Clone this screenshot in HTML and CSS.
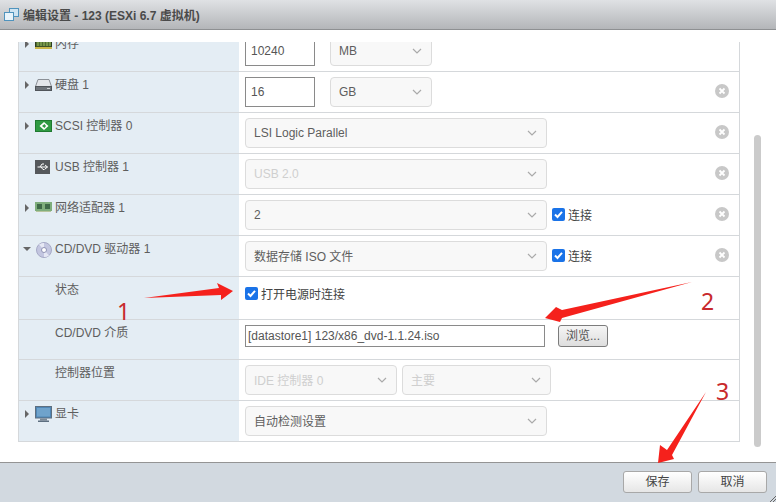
FILE: index.html
```html
<!DOCTYPE html>
<html lang="zh">
<head>
<meta charset="utf-8">
<title>编辑设置</title>
<link rel="stylesheet" href="styles.css">
</head>
<body>
<div class="dialog">
  <header class="head">
    <svg class="head-icon" width="15" height="15" viewBox="0 0 15 15"><rect x="5.5" y="1.5" width="9" height="8" fill="#cfe4f2" stroke="#4f93bd"/><rect x="0.5" y="5.5" width="9" height="8" fill="#e8f3fa" stroke="#4f93bd"/></svg>
    <span class="head-title">编辑设置 - 123 (ESXi 6.7 虚拟机)</span>
  </header>
  <main class="body">
    <div class="scroller">
      <div class="table">
        <div class="row">
          <div class="label"><i class="tri"></i><svg class="ico" width="17" height="12" viewBox="0 0 17 12"><rect x="0.5" y="1" width="16" height="8" fill="#4e6b32" stroke="#2f3d20"/><path d="M3 2v6M6 2v6M9 2v6M12 2v6M15 2v6" stroke="#9cbf62"/><rect x="0" y="9" width="17" height="2" fill="#c9b64a"/></svg><span>内存</span></div>
          <div class="val"><div class="input num">10240</div><div class="sel unit"><span>MB</span><svg class="chev" width="10" height="6" viewBox="0 0 10 6"><path d="M1 1l4 4 4-4" fill="none" stroke="#aaa" stroke-width="1.2"/></svg></div></div>
        </div>
        <div class="row">
          <div class="label"><i class="tri"></i><svg class="ico" width="17" height="12" viewBox="0 0 17 12"><path d="M3 .5h11l2.5 7H.5z" fill="#e3e6ea" stroke="#8b9096"/><rect x="0.5" y="7.5" width="16" height="4" fill="#6e747a" stroke="#50555a"/><rect x="12" y="9" width="3" height="1" fill="#cfd3d6"/></svg><span>硬盘 1</span></div>
          <div class="val"><div class="input num">16</div><div class="sel unit"><span>GB</span><svg class="chev" width="10" height="6" viewBox="0 0 10 6"><path d="M1 1l4 4 4-4" fill="none" stroke="#aaa" stroke-width="1.2"/></svg></div></div>
          <svg class="del" width="14" height="14" viewBox="0 0 14 14"><circle cx="7" cy="7" r="7" fill="#c8c8c8"/><path d="M4.500 4.500l5 5M9.500 4.500l-5 5" stroke="#fff" stroke-width="1.800"/></svg>
        </div>
        <div class="row">
          <div class="label"><i class="tri"></i><svg class="ico" width="17" height="12" viewBox="0 0 17 12"><rect x="0.5" y="0.500" width="16" height="11" fill="#2f9a42" stroke="#1f7a30"/><path d="M9 2L4.500 6 9 10 13.500 6z" fill="#fff"/><path d="M9.500 4L7 6l2.500 2L11 6z" fill="#2f9a42"/></svg><span>SCSI 控制器 0</span></div>
          <div class="val"><div class="sel wide"><span>LSI Logic Parallel</span><svg class="chev" width="10" height="6" viewBox="0 0 10 6"><path d="M1 1l4 4 4-4" fill="none" stroke="#aaa" stroke-width="1.2"/></svg></div></div>
          <svg class="del" width="14" height="14" viewBox="0 0 14 14"><circle cx="7" cy="7" r="7" fill="#c8c8c8"/><path d="M4.500 4.500l5 5M9.500 4.500l-5 5" stroke="#fff" stroke-width="1.800"/></svg>
        </div>
        <div class="row">
          <div class="label"><i class="tri none"></i><svg class="ico narrow flush" width="15" height="14" viewBox="0 0 15 14"><rect width="15" height="14" fill="#55585b"/><path d="M2.500 7h10M10 5l2.500 2L10 9M5 7l2-3h2M6 7l2 2.500h1.500" stroke="#fff" fill="none"/></svg><span>USB 控制器 1</span></div>
          <div class="val"><div class="sel wide off"><span>USB 2.0</span><svg class="chev" width="10" height="6" viewBox="0 0 10 6"><path d="M1 1l4 4 4-4" fill="none" stroke="#aaa" stroke-width="1.2"/></svg></div></div>
          <svg class="del" width="14" height="14" viewBox="0 0 14 14"><circle cx="7" cy="7" r="7" fill="#c8c8c8"/><path d="M4.500 4.500l5 5M9.500 4.500l-5 5" stroke="#fff" stroke-width="1.800"/></svg>
        </div>
        <div class="row">
          <div class="label"><i class="tri"></i><svg class="ico" width="17" height="10" viewBox="0 0 17 10"><rect width="17" height="9" fill="#7fae7c"/><rect x="2" y="2" width="5" height="5" fill="#3f6a48"/><rect x="10" y="2" width="5" height="5" fill="#3f6a48"/><rect x="1" y="9" width="15" height="1" fill="#b7c49c"/></svg><span>网络适配器 1</span></div>
          <div class="val"><div class="sel wide"><span>2</span><svg class="chev" width="10" height="6" viewBox="0 0 10 6"><path d="M1 1l4 4 4-4" fill="none" stroke="#aaa" stroke-width="1.2"/></svg></div><label class="chk"><svg class="box" width="13" height="13" viewBox="0 0 13 13"><rect width="13" height="13" rx="2" fill="#1a73e8"/><path d="M3 6.500l2.500 2.500L10 3.800" fill="none" stroke="#fff" stroke-width="2"/></svg>连接</label></div>
          <svg class="del" width="14" height="14" viewBox="0 0 14 14"><circle cx="7" cy="7" r="7" fill="#c8c8c8"/><path d="M4.500 4.500l5 5M9.500 4.500l-5 5" stroke="#fff" stroke-width="1.800"/></svg>
        </div>
        <div class="row">
          <div class="label"><i class="tri open"></i><svg class="ico cd flush" width="16" height="16" viewBox="0 0 16 16"><circle cx="8" cy="8" r="7.500" fill="#c3c6e0" stroke="#a6a9c6"/><path d="M8 8L3 2.500A7 7 0 0 1 8 1zM8 8l5 5.500A7 7 0 0 1 8 15z" fill="#e6e8f4"/><circle cx="8" cy="8" r="2.500" fill="#fff" stroke="#9093b4"/></svg><span>CD/DVD 驱动器 1</span></div>
          <div class="val"><div class="sel wide"><span class="cjk">数据存储 ISO 文件</span><svg class="chev" width="10" height="6" viewBox="0 0 10 6"><path d="M1 1l4 4 4-4" fill="none" stroke="#aaa" stroke-width="1.2"/></svg></div><label class="chk"><svg class="box" width="13" height="13" viewBox="0 0 13 13"><rect width="13" height="13" rx="2" fill="#1a73e8"/><path d="M3 6.500l2.500 2.500L10 3.800" fill="none" stroke="#fff" stroke-width="2"/></svg>连接</label></div>
          <svg class="del" width="14" height="14" viewBox="0 0 14 14"><circle cx="7" cy="7" r="7" fill="#c8c8c8"/><path d="M4.500 4.500l5 5M9.500 4.500l-5 5" stroke="#fff" stroke-width="1.800"/></svg>
        </div>
        <div class="row status">
          <div class="label sub"><span>状态</span></div>
          <div class="val"><label class="chk first"><svg class="box" width="13" height="13" viewBox="0 0 13 13"><rect width="13" height="13" rx="2" fill="#1a73e8"/><path d="M3 6.500l2.500 2.500L10 3.800" fill="none" stroke="#fff" stroke-width="2"/></svg>打开电源时连接</label></div>
        </div>
        <div class="row media">
          <div class="label sub"><span>CD/DVD 介质</span></div>
          <div class="val"><div class="input path">[datastore1] 123/x86_dvd-1.1.24.iso</div><div class="browse">浏览...</div></div>
        </div>
        <div class="row">
          <div class="label sub"><span>控制器位置</span></div>
          <div class="val"><div class="sel ctl off"><span class="cjk">IDE 控制器 0</span><svg class="chev" width="10" height="6" viewBox="0 0 10 6"><path d="M1 1l4 4 4-4" fill="none" stroke="#aaa" stroke-width="1.2"/></svg></div><div class="sel ctl2 off"><span class="cjk">主要</span><svg class="chev" width="10" height="6" viewBox="0 0 10 6"><path d="M1 1l4 4 4-4" fill="none" stroke="#aaa" stroke-width="1.2"/></svg></div></div>
        </div>
        <div class="row">
          <div class="label"><i class="tri"></i><svg class="ico monitor" width="17" height="16" viewBox="0 0 17 16"><rect x="0.5" y="0.500" width="16" height="11.500" fill="#4f86b5" stroke="#5d6f80"/><rect x="2" y="2" width="13" height="8.500" fill="#6fa3cc"/><rect x="5" y="12.500" width="7" height="2" fill="#7d8a96"/><rect x="3" y="14.500" width="11" height="1.500" fill="#5d6f80"/></svg><span>显卡</span></div>
          <div class="val"><div class="sel wide"><span class="cjk">自动检测设置</span><svg class="chev" width="10" height="6" viewBox="0 0 10 6"><path d="M1 1l4 4 4-4" fill="none" stroke="#aaa" stroke-width="1.2"/></svg></div></div>
        </div>
      </div>
    </div>
    <div class="track"><div class="thumb"></div></div>
  </main>
  <footer class="foot">
    <div class="btn">保存</div>
    <div class="btn">取消</div>
    <svg class="grip" width="6" height="6" viewBox="0 0 6 6"><path d="M0 6L6 0M3 6L6 3" stroke="#666"/></svg>
  </footer>
</div>
<svg class="arrows" width="776" height="502" viewBox="0 0 776 502">
  <path d="M144 298L219 288L217 283L233 291L221 300L221 295z" fill="#f5211c"/>
  <path d="M692 282L562 310L556 307L545 318L560 322L562 318z" fill="#f5211c"/>
  <path d="M706 392L667 450L660 445L658 463L674 459L672 455z" fill="#f5211c"/>
</svg>
<span class="mark m1">1</span>
<span class="mark m2">2</span>
<span class="mark m3">3</span>
</body>
</html>
```
FILE: styles.css
```css
* { box-sizing: border-box; }
html, body { margin: 0; height: 100%; }
body {
  position: relative;
  width: 776px;
  height: 502px;
  overflow: hidden;
  background: #fff;
  font-family: "Liberation Sans", "Noto Sans CJK SC", sans-serif;
  font-size: 12px;
  color: #5e5e5e;
}
.dialog { display: flex; flex-direction: column; height: 502px; }
.head {
  height: 30px;
  flex: none;
  display: flex;
  align-items: center;
  gap: 4px;
  padding: 0 0 1px 4px;
  background: linear-gradient(#dfe1e4, #b4b6b9);
  border-bottom: 1px solid #8e9092;
}
.head-title { font-size: 12px; font-weight: 700; color: #4a4a4a; }
.body {
  flex: 1;
  display: flex;
  align-items: flex-start;
  padding: 12px 15px 0 18px;
}
.scroller { width: 722px; height: 400px; overflow: hidden; flex: none; }
.table { margin-top: -11px; border-left: 1px solid #d5d8db; border-right: 1px solid #d5d8db; }
.row { position: relative; display: flex; height: 41px; border-bottom: 1px solid #d5d8db; }
.row.status { height: 43px; }
.row.media { height: 40px; }
.label {
  width: 220px;
  flex: none;
  display: flex;
  align-items: flex-start;
  padding: 5px 0 0 5px;
  line-height: 16px;
  background: #e4edf4;
}
.label.sub { padding-left: 36px; }
.tri {
  width: 0;
  height: 0;
  margin: 4px 6px 0 1px;
  border-left: 4px solid #666;
  border-top: 4px solid transparent;
  border-bottom: 4px solid transparent;
  flex: none;
}
.tri.none { border-color: transparent; }
.tri.open {
  margin: 6px 5px 0 -1px;
  border-left: 4px solid transparent;
  border-right: 4px solid transparent;
  border-top: 4px solid #666;
  border-bottom: 0;
}
.ico { flex: none; margin: 2px 3px 0 0; }
.ico.flush { margin-top: 1px; }
.ico.narrow { margin-right: 5px; }
.ico.cd { margin-right: 3px; margin-left: 0; }
.ico.monitor { margin-top: 0; }
.val { flex: 1; display: flex; align-items: flex-start; padding: 5px 0 0 6px; }
.input {
  height: 30px;
  border: 1px solid #8a8a8a;
  background: #fff;
  line-height: 28px;
  padding-left: 5px;
  color: #555;
}
.input.num { width: 70px; margin-right: 15px; }
.input.path { width: 300px; height: 22px; line-height: 20px; padding-left: 2px; margin-right: 13px; }
.sel {
  height: 30px;
  display: flex;
  align-items: center;
  justify-content: space-between;
  padding: 0 9px 0 8px;
  background: #f8f8f8;
  border: 1px solid #dcdcdc;
  border-radius: 4px;
}
.cjk { margin-top: -2px; }
.sel.unit { width: 102px; }
.sel.wide { width: 302px; }
.sel.ctl { width: 152px; margin-right: 5px; }
.sel.ctl2 { width: 149px; }
.sel.off span { color: #cfcfcf; }
.chk { display: flex; align-items: center; height: 28px; margin-left: 5px; gap: 3px; color: #444; }
.chk.first { margin-left: 0; height: 15px; margin-top: 4px; }
.box { flex: none; }
.browse {
  width: 50px;
  height: 22px;
  text-align: center;
  line-height: 20px;
  border: 1px solid #7c7c7c;
  border-radius: 3px;
  background: linear-gradient(#f5f5f5, #dedede);
  color: #555;
}
.del { position: absolute; right: 10px; top: 12px; }
.track { margin: 93px 0 0 14px; }
.thumb { width: 7px; height: 312px; border-radius: 4px; background: #cbcbcb; }
.foot {
  position: relative;
  height: 40px;
  flex: none;
  display: flex;
  justify-content: flex-end;
  gap: 6px;
  padding: 8px 9px 0 0;
  background: #d2d9e0;
  border-top: 1px solid #949494;
}
.btn {
  width: 69px;
  height: 22px;
  text-align: center;
  line-height: 20px;
  border: 1px solid #a8a8a8;
  border-radius: 3px;
  background: linear-gradient(#fff, #e6e6e6);
  color: #444;
}
.grip { position: absolute; right: 0; bottom: 0; }
.arrows { position: absolute; left: 0; top: 0; pointer-events: none; }
.mark {
  position: absolute;
  font-family: "Noto Sans", sans-serif;
  font-size: 23px;
  line-height: 24px;
  color: #c8292c;
}
.m1 { left: 117px; top: 299px; }
.m2 { left: 701px; top: 289px; }
.m3 { left: 716px; top: 379px; }
```
